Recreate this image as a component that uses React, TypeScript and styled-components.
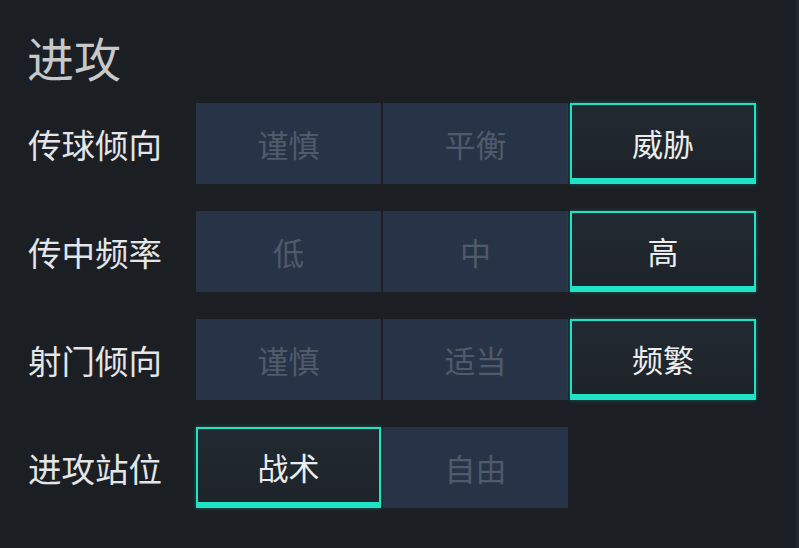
import React from "react";
import styled, { createGlobalStyle } from "styled-components";

const Global = createGlobalStyle`
  html, body { margin: 0; padding: 0; background: #1b1f24; }
  body { font-family: "Noto Sans CJK SC", "Noto Sans", sans-serif; }
`;

const Page = styled.div`
  width: 799px;
  height: 548px;
  box-sizing: border-box;
  padding: 29px 0 0 27px;
  background: #1b1f24;
  border-right: 3px solid #23282e;
`;

const Title = styled.h1`
  margin: 0 0 18px 0;
  font-size: 47px;
  line-height: 56px;
  font-weight: 400;
  color: #c6c8ca;
`;

const Rows = styled.div`
  display: flex;
  flex-direction: column;
  gap: 27px;
  margin-left: 1px;
`;

const Row = styled.div`
  display: flex;
  align-items: center;
  height: 81px;
`;

const Label = styled.div`
  width: 168px;
  font-size: 33.5px;
  color: #e4e5e6;
`;

const Options = styled.div`
  display: grid;
  grid-template-columns: 185px 185px 186px;
  column-gap: 2px;
  height: 100%;
`;

const Option = styled.div<{ $active?: boolean }>`
  box-sizing: border-box;
  display: flex;
  align-items: center;
  justify-content: center;
  font-size: 31px;
  height: 81px;
  background: ${(p) => (p.$active ? "linear-gradient(180deg, #222a31 0%, #1d2329 100%)" : "#273447")};
  color: ${(p) => (p.$active ? "#ecedee" : "#4f5a6a")};
  border: ${(p) => (p.$active ? "2px solid #1fe3c6" : "none")};
  border-bottom: ${(p) => (p.$active ? "6px solid #1fe3c6" : "none")};
  box-shadow: ${(p) => (p.$active ? "0 0 4px rgba(31, 227, 198, 0.35)" : "none")};
  padding-top: ${(p) => (p.$active ? "2px" : "0")};
`;

const data: { label: string; options: string[]; active: number }[] = [
  { label: "传球倾向", options: ["谨慎", "平衡", "威胁"], active: 2 },
  { label: "传中频率", options: ["低", "中", "高"], active: 2 },
  { label: "射门倾向", options: ["谨慎", "适当", "频繁"], active: 2 },
  { label: "进攻站位", options: ["战术", "自由"], active: 0 },
];

export default function App() {
  return (
    <>
      <Global />
      <Page>
        <Title>进攻</Title>
        <Rows>
          {data.map((r) => (
            <Row key={r.label}>
              <Label>{r.label}</Label>
              <Options>
                {r.options.map((o, i) => (
                  <Option key={o} $active={i === r.active}>
                    {o}
                  </Option>
                ))}
              </Options>
            </Row>
          ))}
        </Rows>
      </Page>
    </>
  );
}
